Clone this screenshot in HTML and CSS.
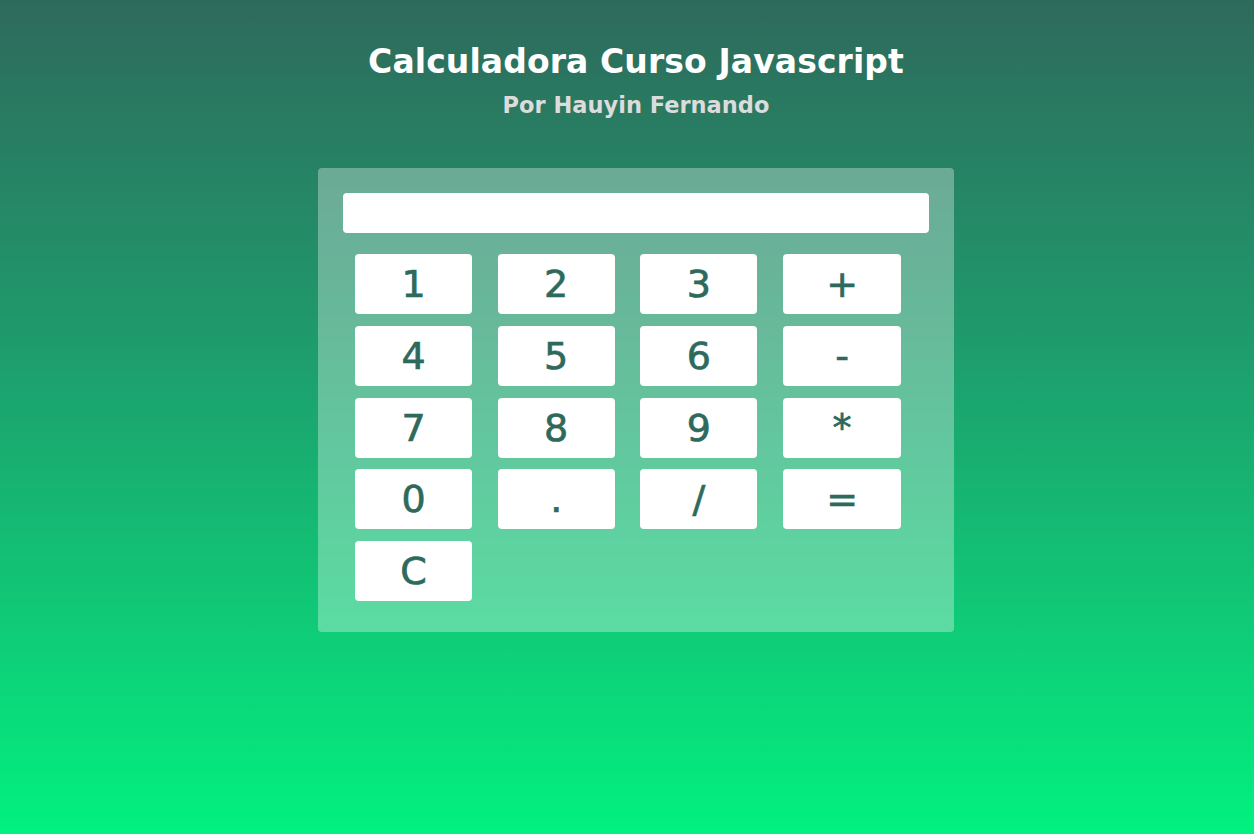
FILE: index.html
```html
<!DOCTYPE html>
<html lang="es">
<head>
<meta charset="utf-8">
<title>Calculadora Curso Javascript</title>
<link rel="stylesheet" href="styles.css">
</head>
<body>
<main class="page">
  <header class="header">
    <h1 class="title">Calculadora Curso Javascript</h1>
    <h2 class="subtitle">Por Hauyin Fernando</h2>
  </header>
  <section class="calc">
    <div class="display"></div>
    <div class="keys">
      <button class="key">1</button>
      <button class="key">2</button>
      <button class="key">3</button>
      <button class="key">+</button>
      <button class="key">4</button>
      <button class="key">5</button>
      <button class="key">6</button>
      <button class="key">-</button>
      <button class="key">7</button>
      <button class="key">8</button>
      <button class="key">9</button>
      <button class="key">*</button>
      <button class="key">0</button>
      <button class="key">.</button>
      <button class="key">/</button>
      <button class="key">=</button>
      <button class="key">C</button>
    </div>
  </section>
</main>
</body>
</html>
```

FILE: styles.css
```css
html, body {
  margin: 0;
  padding: 0;
  height: 100%;
}
body {
  background: linear-gradient(to bottom, #2e6a5c 0%, #1f9a6c 40%, #0fcb77 75%, #02f180 100%);
  font-family: "DejaVu Sans", "Noto Sans", sans-serif;
  min-height: 834px;
}
.page {
  display: flex;
  flex-direction: column;
  align-items: center;
  padding-left: 18px;
  padding-top: 40px;
}
.header {
  text-align: center;
}
.title {
  margin: 0;
  color: #ffffff;
  font-size: 33px;
  font-weight: 700;
  line-height: 44px;
  letter-spacing: 0.1px;
}
.subtitle {
  margin: 6px 0 0 0;
  color: #dcdcdc;
  font-size: 22.5px;
  font-weight: 700;
  line-height: 30px;
}
.calc {
  margin-top: 48px;
  width: 636px;
  box-sizing: border-box;
  padding: 25px 25px 31px 25px;
  background: rgba(255, 255, 255, 0.32);
  border-radius: 4px;
}
.display {
  height: 40px;
  background: #ffffff;
  border-radius: 4px;
}
.keys {
  margin-top: 21px;
  margin-left: 12px;
  display: grid;
  grid-template-columns: 117px 117px 117px 118px;
  column-gap: 26px 25px;
  column-gap: 25.7px;
  row-gap: 11.75px;
  grid-auto-rows: 60px;
}
.key {
  border: none;
  background: #ffffff;
  border-radius: 4px;
  color: #2e6a5c;
  font-family: "DejaVu Sans", "Noto Sans", sans-serif;
  font-size: 38px;
  font-weight: 400;
  -webkit-text-stroke: 0.7px #2e6a5c;
  padding: 0;
  cursor: pointer;
}
```
